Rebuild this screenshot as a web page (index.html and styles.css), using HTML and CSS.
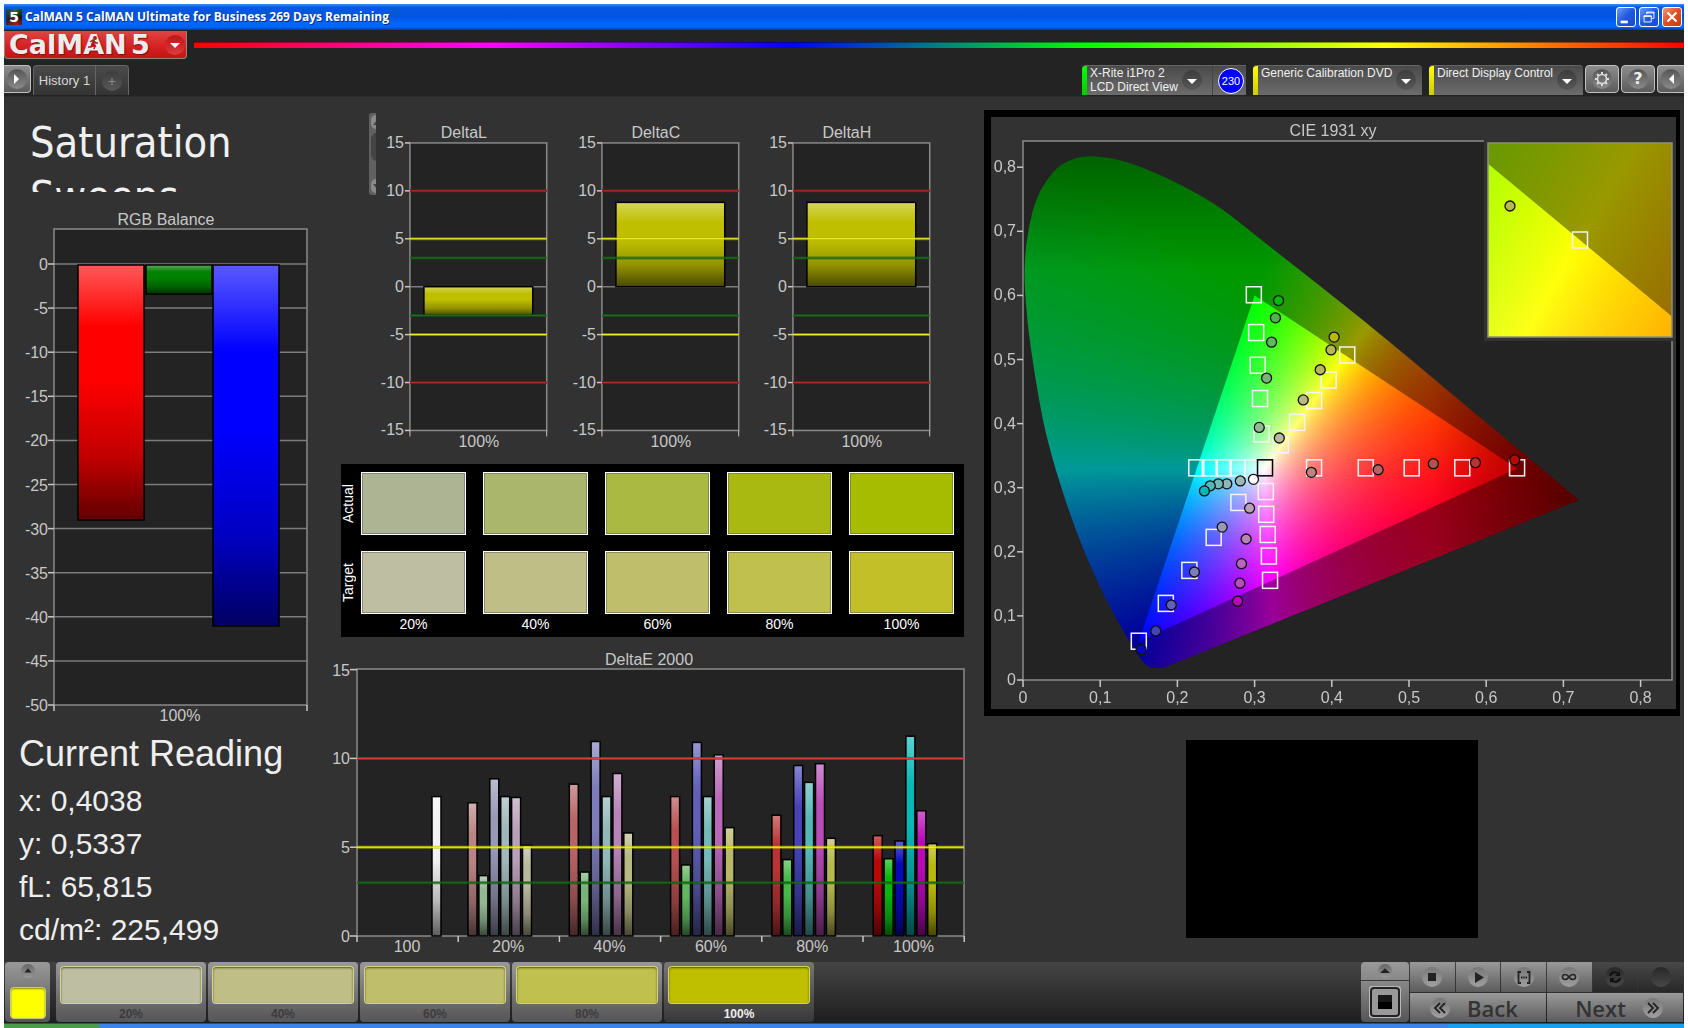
FILE: index.html
```html
<!DOCTYPE html>
<html lang="en">
<head>
<meta charset="utf-8">
<title>CalMAN 5</title>
<link rel="stylesheet" href="styles.css">
</head>
<body>
<div class="window">
  <header class="titlebar">
    <span class="app-icon">5</span>
    <h1 class="app-title">CalMAN 5 CalMAN Ultimate for Business 269 Days Remaining</h1>
    <div class="window-buttons">
      <button class="win-btn" aria-label="Minimize"><svg viewBox="0 0 20 20"><path d="M4 14h8v3H4z" fill="#fff"/></svg></button>
      <button class="win-btn" aria-label="Restore"><svg viewBox="0 0 20 20" fill="none" stroke="#fff"><path d="M7.500 7V4.500h8v7H13M7 5.500h9M4.500 8.500h8v7h-8zM4 9.500h9"/></svg></button>
      <button class="win-btn close" aria-label="Close"><svg viewBox="0 0 20 20"><path d="M5 5l10 10M15 5L5 15" stroke="#fff" stroke-width="2.400"/></svg></button>
    </div>
  </header>

  <div class="brand-row">
    <button class="logo" aria-label="CalMAN 5 menu">
      <span class="logo-name">CalMAN</span><span class="logo-five">5</span>
      <svg class="logo-runner" viewBox="0 0 12 14" fill="none" stroke="#b01818" stroke-width="1.500"><circle cx="8" cy="2" r="1.200" fill="#b01818"/><path d="M7 4L5 8l3 2-1 3M5 8l-1 3H1M3 6l3-2 3 3h2"/></svg>
      <svg class="round red" viewBox="0 0 20 20"><path d="M5 8h10l-5 5z" fill="#fff"/></svg>
    </button>
    <div class="rainbow"></div>
  </div>

  <nav class="tab-row">
    <button class="edge-btn left" aria-label="Expand panel"><svg class="round" viewBox="0 0 20 20"><path d="M7 5v10l5-5z" fill="#fff"/></svg></button>
    <div class="tabs">
      <button class="tab">History 1</button>
      <button class="tab add" aria-label="Add tab"><svg class="round dim" viewBox="0 0 20 20"><path d="M10 7v7M6.500 10.500h7" stroke="#8a8a8a" stroke-width="1.200"/></svg></button>
    </div>
    <div class="devices">
      <button class="device meter"><span class="strip green"></span><span class="device-name">X-Rite i1Pro 2<br>LCD Direct View</span><svg class="round dim" viewBox="0 0 20 20"><path d="M5 9h10l-5 5z" fill="#fff"/></svg></button>
      <div class="badge-cell"><span class="badge">230</span></div>
      <button class="device source"><span class="strip"></span><span class="device-name">Generic Calibration DVD</span><svg class="round dim" viewBox="0 0 20 20"><path d="M5 9h10l-5 5z" fill="#fff"/></svg></button>
      <button class="device display"><span class="strip"></span><span class="device-name">Direct Display Control</span><svg class="round dim" viewBox="0 0 20 20"><path d="M5 9h10l-5 5z" fill="#fff"/></svg></button>
      <button class="tool" aria-label="Settings"><svg class="round" viewBox="0 0 20 20" fill="none" stroke="#ddd"><circle cx="10" cy="10" r="4.500" stroke-width="1.600"/><path stroke-width="2" d="M10 3v2M10 15v2M3 10h2M15 10h2M5 5l1.500 1.500M13.500 13.500L15 15M15 5l-1.500 1.500M6.500 13.500L5 15"/></svg></button>
      <button class="tool help" aria-label="Help"><span class="round">?</span></button>
      <button class="edge-btn right" aria-label="Collapse panel"><svg class="round" viewBox="0 0 20 20"><path d="M13 5v10l-5-5z" fill="#fff"/></svg></button>
    </div>
  </nav>

  <main class="workspace">
    <section class="col-left">
      <h2 class="page-title">Saturation Sweeps</h2>
      <svg class="chart" id="rgb-balance" viewBox="0 0 326 532" role="img" aria-label="RGB Balance"></svg>
      <h2 class="reading-title">Current Reading</h2>
      <ul class="readings">
        <li>x: 0,4038</li>
        <li>y: 0,5337</li>
        <li>fL: 65,815</li>
        <li>cd/m²: 225,499</li>
      </ul>
    </section>

    <section class="col-mid">
      <div class="deltas">
        <svg class="scroll-edge" viewBox="0 0 7 82"><rect width="14" height="82" rx="3" fill="#606060"/><rect x="2" y="2" width="12" height="14" rx="5" fill="#8a8a8a"/><path d="M4 12l4-5v5z" fill="#444"/><rect x="2" y="20" width="12" height="28" rx="6" fill="#444"/><rect x="2" y="66" width="12" height="14" rx="5" fill="#8a8a8a"/><path d="M4 71l4 5v-5z" fill="#444"/></svg>
        <svg class="chart" id="delta-l" viewBox="0 0 192 344" role="img" aria-label="DeltaL"></svg>
        <svg class="chart" id="delta-c" viewBox="0 0 192 344" role="img" aria-label="DeltaC"></svg>
        <svg class="chart" id="delta-h" viewBox="0 0 192 344" role="img" aria-label="DeltaH"></svg>
      </div>
      <div class="swatches">
        <span class="row-name">Actual</span>
        <i class="a20"></i><i class="a40"></i><i class="a60"></i><i class="a80"></i><i class="a100"></i>
        <span class="row-name">Target</span>
        <i class="t20"></i><i class="t40"></i><i class="t60"></i><i class="t80"></i><i class="t100"></i>
        <span></span>
        <span>20%</span><span>40%</span><span>60%</span><span>80%</span><span>100%</span>
      </div>
      <svg class="chart" id="delta-e" viewBox="0 0 650 312" role="img" aria-label="DeltaE 2000"></svg>
    </section>

    <section class="col-right">
      <div class="cie">
        <canvas id="cie-fill" width="685" height="592"></canvas>
        <svg class="chart" id="cie-marks" viewBox="0 0 685 592" role="img" aria-label="CIE 1931 xy"></svg>
      </div>
      <div class="preview"></div>
    </section>
  </main>

  <footer class="toolbar">
    <button class="color-pick" aria-label="Current patch">
      <svg class="round small dark" viewBox="0 0 20 20"><path d="M5 12h10l-5-6z" fill="#222"/></svg>
      <span class="pick"></span>
    </button>
    <div class="patches">
      <button class="patch"><span class="chip t20"></span>20%</button>
      <button class="patch"><span class="chip t40"></span>40%</button>
      <button class="patch"><span class="chip t60"></span>60%</button>
      <button class="patch"><span class="chip t80"></span>80%</button>
      <button class="patch active"><span class="chip full"></span>100%</button>
    </div>
    <div class="mode">
      <button class="mode-up" aria-label="More"><svg class="round small dark" viewBox="0 0 20 20"><path d="M3 13h14l-7-7z" fill="#222"/></svg></button>
      <button class="mode-main" aria-label="Read single"><svg viewBox="0 0 34 34"><rect x="1" y="1" width="32" height="32" rx="3" fill="#b8b8b8"/><rect x="2" y="2" width="30" height="30" rx="4" fill="#222"/><rect x="4" y="4" width="26" height="26" rx="2" fill="#999"/><rect x="10" y="10" width="14" height="14" fill="#000"/><path d="M10 10h14v7H10z" fill="#181818"/></svg></button>
    </div>
    <div class="controls">
      <div class="transport">
        <button aria-label="Stop"><svg class="round" viewBox="0 0 20 20"><path d="M6 6h8v8H6z" fill="#222"/></svg></button>
        <button aria-label="Play"><svg class="round" viewBox="0 0 20 20"><path d="M7 5v11l9-5.500z" fill="#222"/></svg></button>
        <button aria-label="Read series"><svg class="round" viewBox="0 0 20 20" fill="none" stroke="#222" stroke-width="1.800"><path d="M7 5H4.500v11H7M13 5h2.500v11H13M7 10.500h1.500M9.300 10.500h1.500M11.600 10.500h1.500"/></svg></button>
        <button aria-label="Read continuous"><svg class="round" viewBox="0 0 20 20" fill="none" stroke="#222" stroke-width="1.600"><path d="M10 10C8 7 3.500 6.500 3.500 10S8 13 10 10s6.500-3.500 6.500 0S12 13 10 10z"/></svg></button>
        <button class="off" aria-label="Repeat"><svg class="round" viewBox="0 0 20 20" fill="none" stroke="#111" stroke-width="2.200"><path d="M5 9c1-4 6-5 8.500-2M15 11c-1 4-6 5-8.500 2"/><path d="M15 4v5h-5zM5 16v-5h5z" fill="#111" stroke="none"/></svg></button>
        <button class="off" aria-label="Record"><svg class="round" viewBox="0 0 20 20"></svg></button>
      </div>
      <div class="steps">
        <button class="back"><svg class="round" viewBox="0 0 20 20" fill="none" stroke="#222" stroke-width="1.800"><path d="M10 5l-5 5 5 5M15 5l-5 5 5 5"/></svg>Back</button>
        <button class="next">Next<svg class="round" viewBox="0 0 20 20" fill="none" stroke="#222" stroke-width="1.800"><path d="M5 5l5 5-5 5M10 5l5 5-5 5"/></svg></button>
      </div>
    </div>
  </footer>
  <div class="taskbar"><span class="start"></span><span class="tray"></span></div>
</div>

<svg class="defs" width="0" height="0" aria-hidden="true">
  <linearGradient id="shade" x1="0" y1="0" x2="0" y2="1">
    <stop offset="0" stop-color="#fff" stop-opacity=".35"/>
    <stop offset=".24" stop-color="#fff" stop-opacity="0"/>
    <stop offset=".45" stop-color="#000" stop-opacity="0"/>
    <stop offset=".75" stop-color="#000" stop-opacity=".24"/>
    <stop offset="1" stop-color="#000" stop-opacity=".62"/>
  </linearGradient>
</svg>
<script src="charts.js"></script>
</body>
</html>
```
FILE: styles.css
```css
* { box-sizing: border-box; }
body {
  margin: 0;
  padding: 4px 4px 0;
  background: #fff;
  font-family: "Liberation Sans", Arial, sans-serif;
  font-size: 12px;
  color: #e6e6e6;
}
button {
  margin: 0;
  padding: 0;
  border: 0;
  background: none;
  color: inherit;
  font: inherit;
}
h1, h2, ul { margin: 0; padding: 0; font-weight: normal; list-style: none; }
svg { display: block; }
.defs { position: absolute; }
.window { background: #232323; }

/* Title bar */
.titlebar {
  display: flex;
  align-items: center;
  height: 26px;
  padding: 0 2px;
  background: linear-gradient(#3a92ff, #0858e0 12%, #0054e3 50%, #0066ff 75%, #0062f5 90%, #0038b0);
}
.app-icon {
  width: 16px;
  height: 16px;
  background: conic-gradient(#2a7a30, #111 25%, #a02020 45%, #222 70%, #306040);
  color: #fff;
  font: bold 14px/16px "DejaVu Sans", sans-serif;
  text-align: center;
}
.app-title {
  flex: 1;
  padding-left: 3px;
  font: bold 13px/24px "DejaVu Sans Condensed", "Open Sans", sans-serif;
  font: bold 12px/24px "Open Sans", "Noto Sans", sans-serif;
  color: #fff;
  text-shadow: 1px 1px 0 #0a2a80;
}
.window-buttons { display: flex; gap: 3px; }
.win-btn {
  width: 20px;
  height: 20px;
  border: 1px solid #fff;
  border-radius: 3px;
  background: linear-gradient(135deg, #6a9cf8, #2058e0 50%, #1848d0);
}
.win-btn.close { background: linear-gradient(135deg, #f09878, #e04c20 50%, #c83c10); }

/* Brand */
.brand-row { display: flex; align-items: center; gap: 7px; padding-top: 1px; }
.logo {
  position: relative;
  display: flex;
  align-items: center;
  width: 183px;
  height: 28px;
  padding-left: 4px;
  border: 1px solid #a08080;
  border-top: 0;
  border-radius: 0 0 4px 4px;
  overflow: hidden;
  background: linear-gradient(#e04444, #d42020 60%, #c41414);
  font: bold 27px/24px "DejaVu Sans", sans-serif;
  color: #ececec;
  text-shadow: 1px 1px 1px #801010;
}
.logo-name { width: 122px; text-align: left; }
.logo-five { width: 34px; text-align: left; }
.logo-runner { position: absolute; left: 82px; top: 5px; width: 12px; height: 14px; }
.rainbow {
  flex: 1;
  height: 6px;
  background: linear-gradient(90deg, #f00, #f0f 20%, #00f 40%, #0f0 60%, #ff0 80%, #f00);
  box-shadow: inset 0 1px 0 rgba(0, 0, 0, .4);
}
.round {
  flex: none;
  width: 20px;
  height: 20px;
  border-radius: 50%;
  background: linear-gradient(#555, #8a8a8a);
}
.round.small { width: 14px; height: 14px; }
.round.dim { background: linear-gradient(#3c3c3c, #585858); }
.round.dark { background: linear-gradient(#666, #999); }
.round.red { background: linear-gradient(#b81818, #dd3c3c); }

/* Tabs and devices */
.tab-row { display: flex; align-items: flex-start; height: 37px; padding-top: 6px; }
.edge-btn, .tool {
  display: flex;
  align-items: center;
  justify-content: center;
  width: 34px;
  height: 28px;
  border: 1px solid #c0c0c0;
  border-radius: 4px;
  background: linear-gradient(#8c8c8c, #5c5c5c);
}
.edge-btn { width: 27px; }
.edge-btn.left { border-left: 0; border-radius: 0 4px 4px 0; }
.edge-btn.right { border-right: 0; border-radius: 4px 0 0 4px; }
.tabs {
  display: flex;
  height: 30px;
  margin-left: 2px;
  border: 1px solid #666;
  border-bottom: 0;
  border-radius: 4px 4px 0 0;
  background: linear-gradient(#4a4a4a, #343434);
}
.tab { width: 61px; font-size: 13px; line-height: 30px; color: #d8d8d8; white-space: nowrap; }
.tab.add { display: flex; align-items: center; justify-content: center; width: 33px; border-left: 1px solid #666; }
.devices { display: flex; gap: 2px; margin-left: auto; }
.device, .badge-cell {
  display: flex;
  height: 30px;
  background: linear-gradient(#4a4a4a, #6c6c6c);
  border-top: 1px solid #666;
}
.device { align-items: stretch; border-radius: 4px 4px 0 0; overflow: hidden; }
.device .round { margin: 4px 6px 0 0; }
.device.meter .round { margin-right: 10px; }
.device-name {
  flex: 1;
  padding-left: 3px;
  line-height: 14px;
  text-align: left;
  white-space: nowrap;
  color: #f0f0f0;
}
.strip { width: 5px; background: linear-gradient(#ff0, #cc0); }
.strip.green { background: linear-gradient(#0f0, #0c0); }
.meter { width: 130px; border-radius: 4px 0 0 0; }
.badge-cell { align-items: center; justify-content: center; width: 34px; margin: 0 5px 0 -2px; padding-left: 3px; border-left: 1px solid #444; }
.badge {
  width: 26px;
  height: 26px;
  border: 1px solid #fff;
  border-radius: 50%;
  background: #00f;
  color: #fff;
  font-size: 11px;
  line-height: 24px;
  text-align: center;
}
.source { width: 169px; margin-right: 5px; }
.display { width: 154px; }
.tool.help .round { font: bold 16px/20px "DejaVu Sans", sans-serif; color: #f0f0f0; }

/* Workspace */
.workspace {
  display: grid;
  grid-template-columns: 326fr 650fr 704fr;
  align-items: start;
  background: #323232;
  border-top: 1px solid #2a2a2a;
}
.chart { width: 100%; height: auto; font-size: 16px; fill: #c8c8c8; }
.col-left { padding-top: 18px; }
.page-title {
  height: 77px;
  margin-left: 26px;
  width: 220px;
  overflow: hidden;
  font: 43px/54px "DejaVu Sans Condensed", "DejaVu Sans", sans-serif;
  color: #f0f0f0;
}
.col-left .chart { margin-top: 8px; }
.reading-title { margin: 2px 0 5px 15px; font-size: 36px; line-height: 40px; color: #eee; white-space: nowrap; }
.readings { padding-left: 15px; font-size: 30px; line-height: 43px; color: #eee; white-space: nowrap; }

.col-mid { padding-top: 15px; }
.deltas { display: flex; align-items: flex-start; padding: 0 29px 0 39px; }
.deltas .chart { flex: 1; min-width: 0; }
.scroll-edge { flex: none; width: 7px; height: 82px; margin-top: 1px; }
.swatches {
  display: grid;
  grid-template-columns: 3px repeat(5, 1fr);
  grid-template-rows: 79px 64px 22px;
  column-gap: 17px;
  margin: 9px 16px 0 11px;
  padding: 8px 10px 0 0;
  background: #000;
  color: #fff;
  font-size: 14px;
  line-height: 18px;
  text-align: center;
}
.swatches i { height: 63px; border: 1px solid #fff; box-shadow: inset 0 0 0 1px rgba(90, 90, 90, .5); }
.row-name { width: 15px; height: 63px; line-height: 15px; writing-mode: vertical-rl; transform: rotate(180deg); }
.a20 { background: #adb493; }
.a40 { background: #a9b66c; }
.a60 { background: #a9b942; }
.a80 { background: #a9b912; }
.a100 { background: #a6bc00; }
.t20 { background: #bebea3; }
.t40 { background: #bfbe86; }
.t60 { background: #bfbe6a; }
.t80 { background: #bfc04d; }
.t100 { background: #c2c028; }
.full { background: #bfbf00; }
#delta-e { margin-top: 13px; }

.col-right { padding: 13px 4px 0; }
.cie { display: grid; border: 7px solid #000; border-right-width: 4px; }
.cie > * { grid-area: 1 / 1; width: 100%; height: auto; }
.preview { width: 42%; aspect-ratio: 294 / 199; margin: 24px auto 0; background: #000; }

/* Toolbar */
.toolbar {
  display: flex;
  height: 61px;
  padding: 0 1px;
  background: linear-gradient(#444, #1e1e1e);
}
.color-pick {
  display: flex;
  flex-direction: column;
  align-items: center;
  justify-content: space-between;
  width: 45px;
  height: 60px;
  padding: 2px 0 3px;
  border-radius: 4px;
  background: linear-gradient(#999, #555);
}
.pick { width: 36px; height: 32px; border: 1px solid #c8c880; border-radius: 4px; background: #ff0; box-shadow: inset 0 1px 2px #880; }
.patches { display: flex; gap: 2px; margin-left: 6px; }
.patch {
  display: flex;
  flex-direction: column;
  align-items: center;
  gap: 2px;
  width: 150px;
  height: 60px;
  padding-top: 4px;
  border-radius: 4px;
  background: linear-gradient(#999, #555);
  color: #3c3c3c;
  font-weight: bold;
  line-height: 16px;
}
.patch.active { background: linear-gradient(#777, #383838); color: #eee; }
.chip { flex: none; width: 142px; height: 38px; border: 1px solid rgba(220, 220, 150, .7); border-radius: 4px; box-shadow: inset 0 1px 2px rgba(60, 60, 0, .8); }
.mode { display: flex; flex-direction: column; gap: 1px; width: 48px; margin-left: auto; }
.mode-up { display: flex; justify-content: center; height: 18px; padding-top: 2px; border-radius: 4px 4px 0 0; background: linear-gradient(#999, #888); }
.mode-main { height: 41px; padding-left: 7px; border-radius: 0 0 4px 4px; background: linear-gradient(#888, #555); }
.mode-main svg { width: 34px; height: 34px; }
.controls { display: flex; flex-direction: column; gap: 1px; width: 273px; margin-left: 1px; }
.transport, .steps { display: grid; grid-template-columns: repeat(6, 1fr); gap: 1px; }
.steps { grid-template-columns: 1fr 1fr; }
.transport button, .steps button {
  display: flex;
  align-items: center;
  justify-content: center;
  height: 30px;
  background: linear-gradient(#999, #5c5c5c);
}
.steps button {
  height: 29px;
  gap: 17px;
  color: #333;
  font: 600 22px/28px "Open Sans", "Noto Sans", sans-serif;
}
.steps .back { padding-right: 8px; }
.steps .next { padding-left: 8px; }
.transport .off { background: linear-gradient(#484848, #282828); }
.transport .round, .steps .round { background: linear-gradient(#777, #a0a0a0); }
.transport .off .round { background: linear-gradient(#282828, #484848); }
.taskbar { display: flex; justify-content: space-between; height: 5px; background: #3a84ec; border-top: 1px solid #1850b0; }
.start { width: 96px; background: #4a9c4a; border-radius: 0 4px 0 0; }
.tray { width: 236px; background: #18a0f0; }
```
FILE: charts.js
```js
const TICK = '#c8c8c8';
const hline = (x1, x2, y, color, w = 1) =>
  `<path d="M${x1} ${y}H${x2}" stroke="${color}" stroke-width="${w}"/>`;
const vline = (x, y1, y2, color, w = 1) =>
  `<path d="M${x} ${y1}V${y2}" stroke="${color}" stroke-width="${w}"/>`;
const label = (x, y, s, anchor = 'middle') =>
  `<text x="${x}" y="${y}" text-anchor="${anchor}">${s}</text>`;
const bar = (x, y, w, h, color) =>
  `<rect x="${x}" y="${y}" width="${w}" height="${h}" fill="${color}"/>` +
  `<rect x="${x}" y="${y}" width="${w}" height="${h}" fill="url(#shade)" stroke="#000" stroke-width="1.5"/>`;
const frame = (p) =>
  `<rect x="${p.x}" y="${p.y}" width="${p.w}" height="${p.h}" fill="#232323" stroke="#8a8a8a" stroke-width="1.5"/>`;
const limit = (p, y, color, glow) =>
  hline(p.x, p.x + p.w, y, glow, 3) + hline(p.x, p.x + p.w, y, color);
const put = (id, s) => { document.getElementById(id).innerHTML = s; };

// RGB balance
(() => {
  const p = { x: 50, y: 29, w: 253, h: 476 };
  const Y = (v) => 64 - v * 8.82;
  let s = frame(p) + label(162, 25, 'RGB Balance');
  for (let v = 0; v >= -50; v -= 5) {
    if (v > -50) s += hline(p.x, p.x + p.w, Y(v), '#7c7c7c', 1.5);
    s += hline(44, 50, Y(v), TICK, 1.5) + label(44, Y(v) + 6, v, 'end');
  }
  s += bar(74, 65, 66, 255, '#f00') + bar(142, 65, 66, 29, '#008000') + bar(209, 65, 66, 361, '#00f');
  s += vline(50, 505, 511, TICK, 1.5) + vline(303, 505, 511, TICK, 1.5) + label(176, 521, '100%');
  put('rgb-balance', s);
})();

// Single-bar delta charts
function delta(id, title, value) {
  const p = { x: 34, y: 31, w: 137, h: 288 };
  const Y = (v) => 175 - v * 9.6;
  let s = frame(p) + label(88, 26, title) + hline(34, 171, Y(0), '#7c7c7c', 1.5);
  for (let v = 15; v >= -15; v -= 5) s += hline(29, 34, Y(v), TICK, 1.5) + label(28, Y(v) + 5, v, 'end');
  s += bar(48, Math.min(Y(0), Y(value)), 109, Math.abs(value) * 9.6, '#bfbf00');
  for (const d of [1, -1]) {
    s += limit(p, Y(10 * d), '#b82828', '#701c1c');
    s += limit(p, Y(5 * d), '#ffff30', 'rgba(170,170,0,.6)');
    s += limit(p, Y(3 * d), '#1c741c', 'rgba(20,90,20,.6)');
  }
  s += vline(34, 319, 325, TICK) + vline(171, 319, 325, TICK) + label(103, 336, '100%');
  put(id, s);
}
delta('delta-l', 'DeltaL', -3);
delta('delta-c', 'DeltaC', 8.8);
delta('delta-h', 'DeltaH', 8.8);

const SERIES = {
  red: ['#b88484', '#b86464', '#b85050', '#b83434', '#b80808'],
  green: ['#94b894', '#78b478', '#60b860', '#48b848', '#08b808'],
  blue: ['#9898b8', '#7c7cb8', '#6060b8', '#4444b8', '#0808b8'],
  cyan: ['#a0b8b8', '#90b8b8', '#74b8b8', '#54b8b8', '#08b8b8'],
  magenta: ['#b8a0b8', '#b884b8', '#b868b8', '#b84cb8', '#b808b8'],
  yellow: ['#b8b89c', '#b8b884', '#b8b868', '#b8b850', '#b8b808']
};

// DeltaE 2000
(() => {
  const p = { x: 27, y: 19, w: 607, h: 267 };
  const Y = (v) => 286 - v * 17.76;
  const values = {
    red: [7.5, 8.55, 7.85, 6.8, 5.65],
    green: [3.4, 3.6, 4, 4.3, 4.35],
    blue: [8.85, 10.95, 10.9, 9.6, 5.35],
    cyan: [7.85, 7.85, 7.85, 8.65, 11.25],
    magenta: [7.8, 9.15, 10.2, 9.7, 7.05],
    yellow: [5.1, 5.8, 6.1, 5.5, 5.2]
  };
  let s = frame(p) + label(319, 15, 'DeltaE 2000');
  for (const v of [0, 5, 10, 15]) s += hline(20, 27, Y(v), TICK, 1.5) + label(20, Y(v) + 6, v, 'end');
  s += bar(102, Y(7.85), 9, 7.85 * 17.76, '#f2f2f2');
  Object.keys(values).forEach((name, k) => values[name].forEach((v, g) => {
    s += bar(138 + g * 101.3 + k * 10.9, Y(v), 9, v * 17.76, SERIES[name][g]);
  }));
  s += limit(p, Y(10), '#e04040', 'rgba(190,40,40,.75)');
  s += limit(p, Y(5), '#ffff20', 'rgba(190,190,0,.65)');
  s += limit(p, Y(3), '#147014', 'rgba(20,90,20,.65)');
  ['100', '20%', '40%', '60%', '80%', '100%'].forEach((t, i) => { s += label(77 + i * 101.3, 302, t); });
  for (let i = 0; i <= 6; i++) s += vline(27 + i * 101.2, 286, 292, TICK, 1.5);
  put('delta-e', s);
})();

// CIE 1931 chromaticity
const CX = (x) => 32 + x * 772;
const CY = (y) => 563 - y * 641;
const PRIMARIES = [[.64, .33], [.3, .6], [.15, .06]];
const INSET = { x: 497, y: 26, w: 184, h: 194, cx: .4193, cy: .5053, sx: 3500, sy: 3660 };

// Linear sRGB for a chromaticity, clipped and scaled to a full-strength channel
function chroma(x, y) {
  y = Math.max(y, .002);
  const X = x / y, Z = (1 - x - y) / y;
  const c = [3.2406 * X - 1.5372 - .4986 * Z, -.9689 * X + 1.8758 + .0415 * Z, .0557 * X - .204 + 1.057 * Z]
    .map((v) => Math.max(0, v));
  const m = Math.max(...c);
  let k = 255 / m;
  if (x > .53) k *= Math.max(.5, 1 - (x - .53) * 2.4);
  if (y > .64) k *= Math.max(.6, 1 - (y - .64) * 2);
  return c.map((v) => v * k);
}
function layer(w, h, toXY, strength) {
  const cv = document.createElement('canvas');
  cv.width = w; cv.height = h;
  const g = cv.getContext('2d'), im = g.createImageData(w, h);
  for (let j = 0, o = 0; j < h; j++) for (let i = 0; i < w; i++, o += 4) {
    const c = chroma(...toXY(i + .5, j + .5));
    im.data[o] = c[0] * strength; im.data[o + 1] = c[1] * strength; im.data[o + 2] = c[2] * strength; im.data[o + 3] = 255;
  }
  g.putImageData(im, 0, 0);
  return cv;
}
(() => {
  const g = document.getElementById('cie-fill').getContext('2d');
  g.fillStyle = '#323232'; g.fillRect(0, 0, 685, 592);
  g.fillStyle = '#232323'; g.fillRect(32, 24, 649, 539);
  const locus = [[.488, .515], [.419, .582], [.298, .697], [.255, .7385], [.203, .774], [.155, .8], [.126, .811], [.105, .816],
    [.087, .8175], [.07, .8155], [.051, .8065], [.035, .788], [.0175, .7535], [.007, .707], [.002, .655], [.002, .6135], [.007, .541],
    [.0205, .437], [.032, .37], [.0555, .276], [.0815, .192], [.114, .109], [.146, .044], [.16, .0205], [.173, .0175], [.186, .021]];
  const toXY = (i, j) => [(i - 32) / 772, (563 - j) / 641];
  g.save();
  g.beginPath();
  g.moveTo(CX(.7205), CY(.281));
  g.lineTo(CX(.596), CY(.4055));
  locus.forEach(([x, y], i) => {
    const n = locus[i + 1];
    if (n) g.quadraticCurveTo(CX(x), CY(y), CX((x + n[0]) / 2), CY((y + n[1]) / 2));
    else g.lineTo(CX(x), CY(y));
  });
  g.closePath();
  g.clip();
  g.drawImage(layer(685, 592, toXY, .6), 0, 0);
  g.beginPath();
  PRIMARIES.forEach(([x, y]) => g.lineTo(CX(x), CY(y)));
  g.closePath();
  g.clip();
  g.drawImage(layer(685, 592, toXY, 1), 0, 0);
  g.restore();

  // Magnified view around the yellow target
  const n = INSET;
  g.fillStyle = '#323232'; g.fillRect(n.x - 4, n.y - 4, n.w + 8, n.h + 8);
  const nXY = (i, j) => [n.cx + (i - n.w / 2) / n.sx, n.cy - (j - n.h / 2) / n.sy];
  g.drawImage(layer(n.w, n.h, nXY, .6), n.x, n.y);
  g.save();
  g.beginPath(); g.rect(n.x, n.y, n.w, n.h); g.clip();
  g.beginPath();
  PRIMARIES.forEach(([x, y]) => g.lineTo(n.x + n.w / 2 + (x - n.cx) * n.sx, n.y + n.h / 2 - (y - n.cy) * n.sy));
  g.closePath(); g.clip();
  g.drawImage(layer(n.w, n.h, nXY, 1), n.x, n.y);
  g.restore();
})();
(() => {
  const targets = [
    [.299, .601], [.302, .542], [.304, .491], [.307, .439], [.309, .384],
    [.42, .507], [.396, .468], [.377, .436], [.355, .402], [.334, .367],
    [.2245, .331], [.242, .331], [.26, .331], [.278, .331], [.2975, .331],
    [.377, .331], [.444, .331], [.5035, .331], [.569, .331], [.64, .331],
    [.3145, .294], [.315, .2585], [.317, .227], [.3185, .1935], [.32, .1555],
    [.279, .277], [.247, .2225], [.2155, .171], [.185, .1195], [.15, .0605]
  ];
  const measured = {
    green: [[.306, .394], [.3155, .471], [.322, .527], [.327, .565], [.331, .592]],
    yellow: [[.332, .3775], [.363, .437], [.385, .484], [.399, .515], [.403, .535]],
    cyan: [[.2815, .3105], [.264, .306], [.253, .306], [.2425, .303], [.235, .295]],
    red: [[.3735, .324], [.46, .328], [.5315, .3375], [.586, .339], [.637, .3435]],
    magenta: [[.2935, .268], [.289, .22], [.283, .1815], [.281, .151], [.278, .123]],
    blue: [[.258, .2385], [.222, .1685], [.192, .117], [.172, .0765], [.153, .0475]]
  };
  const square = (x, y, c) => `<rect x="${x - 7.5}" y="${y - 8}" width="15" height="16" fill="none" stroke="${c}" stroke-width="1.5"/>`;
  const dot = (x, y, c) => `<circle cx="${x}" cy="${y}" r="5" fill="${c}" stroke="#111" stroke-width="1.3"/>`;
  const dec = (v) => (v ? '0,' + v : '0');
  let s = label(342, 19, 'CIE 1931 xy');
  s += `<path d="M493 24H32V563H681V224" fill="none" stroke="#8a8a8a" stroke-width="1.5"/>`;
  for (let i = 0; i <= 8; i++) {
    s += hline(26, 32, CY(i / 10), TICK, 1.5) + label(25, CY(i / 10) + 5, dec(i), 'end');
    s += vline(CX(i / 10), 563, 570, TICK, 1.5) + label(CX(i / 10), 586, dec(i));
  }
  targets.forEach(([x, y]) => { s += square(CX(x), CY(y), '#f4f4f4'); });
  s += square(CX(.3135), CY(.331), '#000');
  for (const name in measured) measured[name].forEach(([x, y], i) => { s += dot(CX(x), CY(y), SERIES[name][i]); });
  s += dot(CX(.2985), CY(.313), '#fff');
  s += `<rect x="${INSET.x}" y="${INSET.y}" width="${INSET.w}" height="${INSET.h}" fill="none" stroke="#909078" stroke-width="1.5"/>`;
  s += square(589, 123, '#f4f4f4') + dot(519, 89, SERIES.yellow[3]);
  put('cie-marks', s);
})();
```
